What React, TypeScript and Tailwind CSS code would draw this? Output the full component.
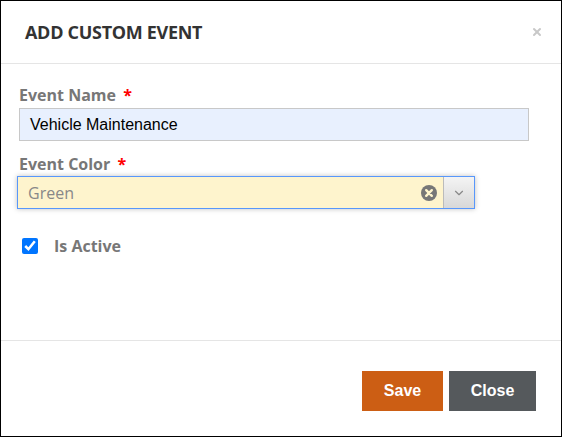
import { X, ChevronDown } from 'lucide-react';

const openSans = { fontFamily: '"Open Sans", "Liberation Sans", sans-serif' };
const arial = { fontFamily: '"Liberation Sans", Arial, sans-serif' };

function ClearIcon() {
  return (
    <svg width="16" height="16" viewBox="0 0 16 16" className="shrink-0">
      <circle cx="8" cy="8" r="8" fill="#777" />
      <path d="M5.2 5.2 L10.8 10.8 M10.8 5.2 L5.2 10.8" stroke="#fef4cd" strokeWidth="2.4" strokeLinecap="round" />
    </svg>
  );
}

export default function App() {
  return (
    <div className="w-[562px] h-[437px] bg-white border border-black flex flex-col" style={openSans}>
      {/* header */}
      <div className="h-[63px] border-b border-[#e5e5e5] flex items-center justify-between pl-[24px] pr-[18px] shrink-0">
        <h4 className="text-[18px] font-bold text-[#333] tracking-[-0.3px]">ADD CUSTOM EVENT</h4>
        <X className="w-[12px] h-[12px] text-[#c8c8c8]" strokeWidth={4} />
      </div>

      {/* body */}
      <div className="flex-1 pl-[18px] pt-[20px] flex flex-col">
        <label className="text-[16px] font-bold text-[#777] leading-[22px]">
          Event Name <span className="text-[#ff0000] ml-[3px]">*</span>
        </label>
        <div
          className="mt-[2px] w-[510px] h-[33px] bg-[#e8f0fe] border border-[#c8c8c8] flex items-center pl-[10px] text-[16px] text-black"
          style={arial}
        >
          Vehicle Maintenance
        </div>

        <label className="mt-[12px] text-[16px] font-bold text-[#777] leading-[22px]">
          Event Color <span className="text-[#ff0000] ml-[3px]">*</span>
        </label>
        <div className="-ml-[2px] mt-[1px] w-[458px] h-[33px] border border-[#5897fb] bg-[#fef4cd] flex items-center shadow-[0_0_5px_rgba(0,0,0,0.25)]">
          <span className="flex-1 pl-[10px] text-[16px] text-[#888]">Green</span>
          <div className="pr-[4px] flex items-center">
            <ClearIcon />
          </div>
          <div className="ml-[2px] w-[31px] h-full border-l border-[#bbb] bg-gradient-to-b from-[#f4f4f4] to-[#d8d8d8] flex items-center justify-center">
            <ChevronDown className="w-[14px] h-[14px] text-[#888]" strokeWidth={2} />
          </div>
        </div>

        <div className="mt-[29px] flex items-center ml-[3px]">
          <input type="checkbox" defaultChecked className="w-[16px] h-[16px] accent-[#0075ff] m-0" />
          <span className="ml-[16px] text-[16px] font-bold text-[#777] leading-[16px]">Is Active</span>
        </div>
      </div>

      {/* footer */}
      <div className="h-[96px] border-t border-[#e5e5e5] flex items-start justify-end pr-[25px] pt-[30px] gap-[6px] shrink-0" style={arial}>
        <button className="w-[81px] h-[40px] bg-[#cc5e14] text-white font-bold text-[16px]">Save</button>
        <button className="w-[87px] h-[40px] bg-[#55595c] text-white font-bold text-[16px]">Close</button>
      </div>
    </div>
  );
}
